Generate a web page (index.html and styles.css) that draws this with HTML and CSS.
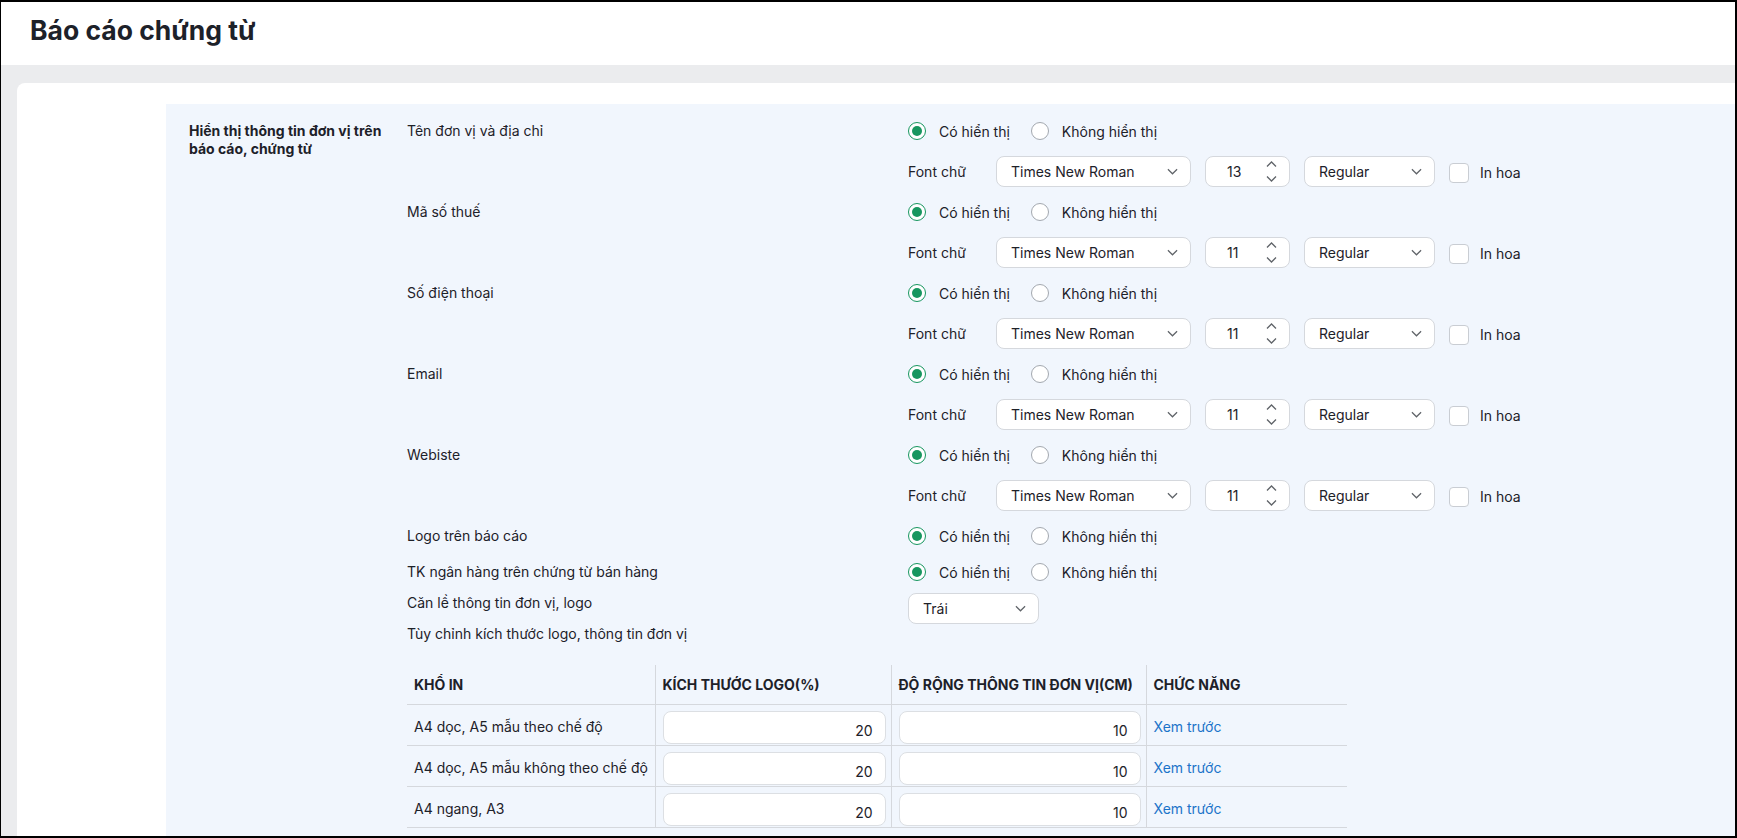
FILE: index.html
```html
<!DOCTYPE html>
<html lang="vi">
<head>
<meta charset="utf-8">
<title>Báo cáo chứng từ</title>
<link rel="stylesheet" href="styles.css">
</head>
<body>
<div class="frame">
	<header class="page-head">
		<h1>Báo cáo chứng từ</h1>
	</header>
	<main class="page-body">
		<section class="card">
			<div class="panel">
				<div class="panel-title">Hiển thị thông tin đơn vị trên báo cáo, chứng từ</div>
				<div class="panel-content">

					<div class="opt">
						<div class="opt-label">Tên đơn vị và địa chỉ</div>
						<div class="opt-ctrl">
							<div class="radios">
								<label class="radio"><span class="dot on"></span>Có hiển thị</label>
								<label class="radio"><span class="dot"></span>Không hiển thị</label>
							</div>
							<div class="font-row">
								<span class="font-label">Font chữ</span>
								<div class="select sel-font">Times New Roman<svg class="chev" viewBox="0 0 12 7"><path d="M1 1l5 5 5-5"/></svg></div>
								<div class="num">13<span class="spin"><svg viewBox="0 0 11 6"><path d="M1 5.5l4.5-4.5 4.5 4.5"/></svg><svg viewBox="0 0 11 6"><path d="M1 0.5l4.5 4.5 4.5-4.5"/></svg></span></div>
								<div class="select sel-style">Regular<svg class="chev" viewBox="0 0 12 7"><path d="M1 1l5 5 5-5"/></svg></div>
								<label class="check"><span class="box"></span>In hoa</label>
							</div>
						</div>
					</div>

					<div class="opt">
						<div class="opt-label">Mã số thuế</div>
						<div class="opt-ctrl">
							<div class="radios">
								<label class="radio"><span class="dot on"></span>Có hiển thị</label>
								<label class="radio"><span class="dot"></span>Không hiển thị</label>
							</div>
							<div class="font-row">
								<span class="font-label">Font chữ</span>
								<div class="select sel-font">Times New Roman<svg class="chev" viewBox="0 0 12 7"><path d="M1 1l5 5 5-5"/></svg></div>
								<div class="num">11<span class="spin"><svg viewBox="0 0 11 6"><path d="M1 5.5l4.5-4.5 4.5 4.5"/></svg><svg viewBox="0 0 11 6"><path d="M1 0.5l4.5 4.5 4.5-4.5"/></svg></span></div>
								<div class="select sel-style">Regular<svg class="chev" viewBox="0 0 12 7"><path d="M1 1l5 5 5-5"/></svg></div>
								<label class="check"><span class="box"></span>In hoa</label>
							</div>
						</div>
					</div>

					<div class="opt">
						<div class="opt-label">Số điện thoại</div>
						<div class="opt-ctrl">
							<div class="radios">
								<label class="radio"><span class="dot on"></span>Có hiển thị</label>
								<label class="radio"><span class="dot"></span>Không hiển thị</label>
							</div>
							<div class="font-row">
								<span class="font-label">Font chữ</span>
								<div class="select sel-font">Times New Roman<svg class="chev" viewBox="0 0 12 7"><path d="M1 1l5 5 5-5"/></svg></div>
								<div class="num">11<span class="spin"><svg viewBox="0 0 11 6"><path d="M1 5.5l4.5-4.5 4.5 4.5"/></svg><svg viewBox="0 0 11 6"><path d="M1 0.5l4.5 4.5 4.5-4.5"/></svg></span></div>
								<div class="select sel-style">Regular<svg class="chev" viewBox="0 0 12 7"><path d="M1 1l5 5 5-5"/></svg></div>
								<label class="check"><span class="box"></span>In hoa</label>
							</div>
						</div>
					</div>

					<div class="opt">
						<div class="opt-label">Email</div>
						<div class="opt-ctrl">
							<div class="radios">
								<label class="radio"><span class="dot on"></span>Có hiển thị</label>
								<label class="radio"><span class="dot"></span>Không hiển thị</label>
							</div>
							<div class="font-row">
								<span class="font-label">Font chữ</span>
								<div class="select sel-font">Times New Roman<svg class="chev" viewBox="0 0 12 7"><path d="M1 1l5 5 5-5"/></svg></div>
								<div class="num">11<span class="spin"><svg viewBox="0 0 11 6"><path d="M1 5.5l4.5-4.5 4.5 4.5"/></svg><svg viewBox="0 0 11 6"><path d="M1 0.5l4.5 4.5 4.5-4.5"/></svg></span></div>
								<div class="select sel-style">Regular<svg class="chev" viewBox="0 0 12 7"><path d="M1 1l5 5 5-5"/></svg></div>
								<label class="check"><span class="box"></span>In hoa</label>
							</div>
						</div>
					</div>

					<div class="opt">
						<div class="opt-label">Webiste</div>
						<div class="opt-ctrl">
							<div class="radios">
								<label class="radio"><span class="dot on"></span>Có hiển thị</label>
								<label class="radio"><span class="dot"></span>Không hiển thị</label>
							</div>
							<div class="font-row">
								<span class="font-label">Font chữ</span>
								<div class="select sel-font">Times New Roman<svg class="chev" viewBox="0 0 12 7"><path d="M1 1l5 5 5-5"/></svg></div>
								<div class="num">11<span class="spin"><svg viewBox="0 0 11 6"><path d="M1 5.5l4.5-4.5 4.5 4.5"/></svg><svg viewBox="0 0 11 6"><path d="M1 0.5l4.5 4.5 4.5-4.5"/></svg></span></div>
								<div class="select sel-style">Regular<svg class="chev" viewBox="0 0 12 7"><path d="M1 1l5 5 5-5"/></svg></div>
								<label class="check"><span class="box"></span>In hoa</label>
							</div>
						</div>
					</div>

					<div class="opt opt-short">
						<div class="opt-label">Logo trên báo cáo</div>
						<div class="opt-ctrl">
							<div class="radios">
								<label class="radio"><span class="dot on"></span>Có hiển thị</label>
								<label class="radio"><span class="dot"></span>Không hiển thị</label>
							</div>
						</div>
					</div>

					<div class="opt opt-short">
						<div class="opt-label">TK ngân hàng trên chứng từ bán hàng</div>
						<div class="opt-ctrl">
							<div class="radios">
								<label class="radio"><span class="dot on"></span>Có hiển thị</label>
								<label class="radio"><span class="dot"></span>Không hiển thị</label>
							</div>
						</div>
					</div>

					<div class="opt opt-top">
						<div class="opt-label">Căn lề thông tin đơn vị, logo</div>
						<div class="opt-ctrl">
							<div class="select sel-align">Trái<svg class="chev" viewBox="0 0 12 7"><path d="M1 1l5 5 5-5"/></svg></div>
						</div>
					</div>

					<div class="opt opt-top">
						<div class="opt-label">Tùy chỉnh kích thước logo, thông tin đơn vị</div>
					</div>

					<table class="size-table">
						<colgroup>
							<col class="c1"><col class="c2"><col class="c3"><col class="c4">
						</colgroup>
						<thead>
							<tr>
								<th>KHỔ IN</th>
								<th>KÍCH THƯỚC LOGO(%)</th>
								<th>ĐỘ RỘNG THÔNG TIN ĐƠN VỊ(CM)</th>
								<th>CHỨC NĂNG</th>
							</tr>
						</thead>
						<tbody>
							<tr>
								<td>A4 dọc, A5 mẫu theo chế độ</td>
								<td class="in-cell"><div class="val">20</div></td>
								<td class="in-cell"><div class="val">10</div></td>
								<td><a href="#" class="link">Xem trước</a></td>
							</tr>
							<tr>
								<td>A4 dọc, A5 mẫu không theo chế độ</td>
								<td class="in-cell"><div class="val">20</div></td>
								<td class="in-cell"><div class="val">10</div></td>
								<td><a href="#" class="link">Xem trước</a></td>
							</tr>
							<tr>
								<td>A4 ngang, A3</td>
								<td class="in-cell"><div class="val">20</div></td>
								<td class="in-cell"><div class="val">10</div></td>
								<td><a href="#" class="link">Xem trước</a></td>
							</tr>
						</tbody>
					</table>

				</div>
			</div>
		</section>
	</main>
</div>
</body>
</html>
```

FILE: styles.css
```css
body{margin:0;font-family:Inter,"Noto Sans",sans-serif;font-size:14px;color:#1d2129;}

.frame{
	box-sizing:border-box;
	width:1737px;
	height:838px;
	border:2px solid #000;
	border-left-width:1px;
	overflow:hidden;
	background:#ebecee;
}
.page-head{
	height:63px;
	background:#fff;
	padding:0 0 0 29px;
}
.page-head h1{
	margin:0;
	padding-top:12px;
	font-size:26.5px;
	line-height:32px;
	font-weight:700;
}

.page-body{padding:18px 0 0 16px;}
.card{
	background:#fff;
	border-radius:8px 0 0 0;
	padding:21px 0 0 149px;
}
.panel{
	display:flex;
	background:#f1f6fd;
	padding:12px 0 60px 23px;
}
.panel-title{
	box-sizing:border-box;
	flex:0 0 218px;
	padding:6px 12px 0 0;
	font-weight:700;
	line-height:18px;
}
.panel-content{flex:1;}

/* option rows */
.opt{
	display:grid;
	grid-template-columns:501px 1fr;
	margin-bottom:10px;
}
.opt-short{margin-bottom:6px;}
.opt-top{margin-bottom:0;}
.opt-label{line-height:30px;}
.opt-top .opt-label{line-height:20px;}

.radios{
	display:flex;
	align-items:center;
	height:30px;
}
.radio{
	display:flex;
	align-items:center;
	margin-right:21px;
}
.dot{
	box-sizing:border-box;
	width:18px;
	height:18px;
	margin-right:13px;
	border:1px solid #a3a8af;
	border-radius:50%;
	background:#fff;
	display:flex;
	align-items:center;
	justify-content:center;
}
.dot.on{border:1.5px solid #17965f;}
.dot.on::after{
	content:'';
	width:10px;
	height:10px;
	border-radius:50%;
	background:#17965f;
}

.font-row{
	display:flex;
	align-items:center;
	height:31px;
	margin-top:10px;
}
.font-label{width:88px;}

.select, .num{
	box-sizing:border-box;
	display:flex;
	align-items:center;
	justify-content:space-between;
	height:31px;
	padding:0 12px 0 14px;
	border:1px solid #d5d8dd;
	border-radius:8px;
	background:#fff;
}
.sel-font{width:195px;margin-right:14px;}
.sel-style{width:131px;margin-right:14px;}
.sel-align{width:131px;}
.chev{
	width:11px;
	height:7px;
	fill:none;
	stroke:#5f6368;
	stroke-width:1.3;
}
.num{
	width:85px;
	margin-right:14px;
	padding-left:21px;
	padding-right:12px;
}
.spin{
	display:flex;
	flex-direction:column;
	gap:9px;
}
.spin svg{
	width:11px;
	height:6px;
	fill:none;
	stroke:#5f6368;
	stroke-width:1.3;
}

.check{
	display:flex;
	align-items:center;
	padding-top:2px;
}
.box{
	box-sizing:border-box;
	width:20px;
	height:20px;
	margin-right:11px;
	border:1px solid #c9cdd3;
	border-radius:4px;
	background:#fff;
}

/* table */
.size-table{
	width:940px;
	margin-top:21px;
	border-collapse:collapse;
	table-layout:fixed;
}
.size-table .c1{width:248px;}
.size-table .c2{width:236px;}
.size-table .c3{width:255px;}
.size-table .c4{width:201px;}
.size-table th, .size-table td{
	padding:0 6px;
	text-align:left;
	border-bottom:1px solid #d5d8dd;
	border-left:1px solid #d5d8dd;
	white-space:nowrap;
}
.size-table th:first-child, .size-table td:first-child{border-left:0;}
.size-table th{
	height:39px;
	font-weight:700;
	padding-left:7px;
}
.size-table td{
	height:33px;
	padding:5px 6px 2px 7px;
}
.size-table td.in-cell{padding:6px 5px 1px 7px;}
.val{
	box-sizing:border-box;
	height:33px;
	padding:4px 12px 0 0;
	line-height:29px;
	text-align:right;
	background:#fff;
	border:1px solid #dcdfe3;
	border-radius:8px;
}
.link{color:#1b74c9;text-decoration:none;}
```
